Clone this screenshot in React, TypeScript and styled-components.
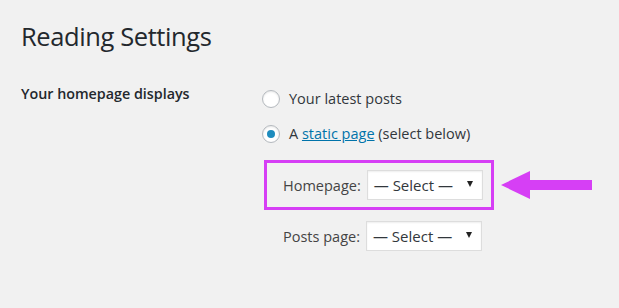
import React from "react";
import styled, { createGlobalStyle } from "styled-components";

const GlobalStyle = createGlobalStyle`
  html, body {
    margin: 0;
    padding: 0;
    background: #f1f1f1;
  }
  body {
    font-family: "Open Sans", "Noto Sans", sans-serif;
    color: #23282d;
  }
`;

const App = () => {
    return (
        <Page>
            <GlobalStyle />
            <Title>Reading Settings</Title>
            <FormRow>
                <RowLabel>Your homepage displays</RowLabel>
                <Field>
                    <RadioRow>
                        <Radio />
                        <span>Your latest posts</span>
                    </RadioRow>
                    <RadioRow>
                        <Radio checked />
                        <span>
                            A <Link>static page</Link> (select below)
                        </span>
                    </RadioRow>
                    <Highlight>
                        <Marked>
                            <PageLabel>Homepage:</PageLabel>
                            <Select>
                                <span>— Select —</span>
                                <Caret />
                            </Select>
                        </Marked>
                        <Arrow width="92" height="30" viewBox="0 0 92 30">
                            <polygon points="0,15 29,1 29,10 91,10 91,20 29,20 29,29" fill="#d63ff5" />
                        </Arrow>
                    </Highlight>
                    <PostsRow>
                        <PageLabel>Posts page:</PageLabel>
                        <Select>
                            <span>— Select —</span>
                            <Caret />
                        </Select>
                    </PostsRow>
                </Field>
            </FormRow>
        </Page>
    );
};

const Page = styled.div`
  width: 619px;
  height: 308px;
  box-sizing: border-box;
  padding: 20px 0 0 21px;
  overflow: hidden;
`;

const Title = styled.h1`
  margin: 0;
  font-size: 25.5px;
  font-weight: 400;
  line-height: 32px;
  color: #23282d;
  letter-spacing: -0.4px;
`;

const FormRow = styled.div`
  display: flex;
  margin-top: 37px;
`;

const RowLabel = styled.div`
  width: 241px;
  flex: none;
  margin-top: -5px;
  font-size: 14.3px;
  font-weight: 600;
  line-height: 20px;
  color: #23282d;
`;

const Field = styled.div`
  display: flex;
  flex-direction: column;
  font-size: 14.5px;
  color: #32373c;
`;

const RadioRow = styled.label`
  display: flex;
  align-items: center;
  gap: 9px;
  height: 20px;
  margin-bottom: 15px;
  line-height: 20px;
`;

const Radio = styled.span<{ checked?: boolean }>`
  position: relative;
  width: 16px;
  height: 16px;
  flex: none;
  border: 1px solid #b4b9be;
  border-radius: 50%;
  background: #fff;
  box-shadow: inset 0 1px 2px rgba(0, 0, 0, 0.1);
  &::after {
    content: "";
    display: ${(p) => (p.checked ? "block" : "none")};
    position: absolute;
    left: 4px;
    top: 4px;
    width: 8px;
    height: 8px;
    border-radius: 50%;
    background: #1e8cbe;
  }
`;

const Link = styled.a`
  color: #0073aa;
  text-decoration: underline;
`;

const Highlight = styled.div`
  display: flex;
  align-items: center;
  gap: 7px;
  margin-left: 2px;
  margin-top: 1px;
`;

const Marked = styled.div`
  display: flex;
  align-items: center;
  gap: 6px;
  width: 230px;
  height: 50px;
  box-sizing: border-box;
  border: 3px solid #d63ff5;
  padding-left: 16px;
`;

const PageLabel = styled.span`
  color: #444;
  font-size: 14.5px;
`;

const Select = styled.div`
  display: flex;
  align-items: center;
  justify-content: space-between;
  width: 116px;
  height: 30px;
  box-sizing: border-box;
  padding: 0 9px 0 6px;
  background: #fff;
  border: 1px solid #ddd;
  box-shadow: inset 0 1px 2px rgba(0, 0, 0, 0.07);
  color: #32373c;
  font-size: 15px;
`;

const Caret = styled.span`
  width: 0;
  height: 0;
  margin-top: -2px;
  border-left: 3px solid transparent;
  border-right: 3px solid transparent;
  border-top: 6px solid #222;
`;

const Arrow = styled.svg`
  display: block;
  flex: none;
`;

const PostsRow = styled.div`
  display: flex;
  align-items: center;
  gap: 6px;
  margin-top: 11px;
  padding-left: 21px;
`;

export default App;
